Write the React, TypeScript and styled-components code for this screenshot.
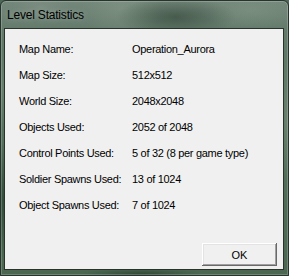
import styled, { createGlobalStyle } from 'styled-components';

const GlobalStyle = createGlobalStyle`
  html, body {
    margin: 0;
    padding: 0;
    background: #4d6656;
  }
  body {
    font-family: "Liberation Sans", Arial, sans-serif;
  }
`;

const stats: [string, string][] = [
  ['Map Name:', 'Operation_Aurora'],
  ['Map Size:', '512x512'],
  ['World Size:', '2048x2048'],
  ['Objects Used:', '2052 of 2048'],
  ['Control Points Used:', '5 of 32 (8 per game type)'],
  ['Soldier Spawns Used:', '13 of 1024'],
  ['Object Spawns Used:', '7 of 1024'],
];

const App = () => {
  return (
    <>
      <GlobalStyle />
      <Window>
        <TitleBar>Level Statistics</TitleBar>
        <Client>
          <StatsGrid>
            {stats.map(([label, value]) => (
              <Row key={label}>
                <Label>{label}</Label>
                <Value>{value}</Value>
              </Row>
            ))}
          </StatsGrid>
          <Footer>
            <Button>OK</Button>
          </Footer>
        </Client>
      </Window>
    </>
  );
};

const Window = styled.div`
  width: 289px;
  height: 276px;
  box-sizing: border-box;
  display: flex;
  flex-direction: column;
  border-radius: 6px 6px 0 0;
  border: 1px solid #26342b;
  // aero basic frame, blurred green texture
  background:
    radial-gradient(ellipse 60px 20px at 175px 16px, rgba(35, 55, 40, 0.5), transparent),
    radial-gradient(ellipse 50px 18px at 250px 10px, rgba(140, 160, 140, 0.35), transparent),
    radial-gradient(ellipse 40px 30px at 120px 8px, rgba(140, 158, 140, 0.4), transparent),
    radial-gradient(ellipse 30px 14px at 40px 6px, rgba(140, 155, 140, 0.35), transparent),
    radial-gradient(ellipse 8px 60px at 3px 200px, rgba(25, 45, 30, 0.55), transparent),
    radial-gradient(ellipse 8px 40px at 3px 90px, rgba(130, 150, 130, 0.35), transparent),
    radial-gradient(ellipse 8px 60px at 286px 120px, rgba(130, 150, 130, 0.45), transparent),
    radial-gradient(ellipse 60px 6px at 140px 273px, rgba(25, 45, 30, 0.5), transparent),
    linear-gradient(180deg, #73877a 0%, #62796a 12%, #54705c 50%, #4b6752 100%);
  box-shadow: inset 0 0 0 1px rgba(255, 255, 255, 0.2);
  overflow: hidden;
`;

const TitleBar = styled.div`
  height: 27px;
  flex: none;
  display: flex;
  align-items: center;
  padding-left: 6px;
  font-size: 12px;
  letter-spacing: -0.2px;
  color: #000;
  text-shadow: 0 0 6px rgba(255, 255, 255, 0.4);
`;

const Client = styled.div`
  flex: 1;
  margin: 0 4px 5px 3px;
  background: #f0f0f0;
  border: 1px solid #27332b;
  display: flex;
  flex-direction: column;
`;

const StatsGrid = styled.div`
  padding: 7px 0 0 14px;
  display: flex;
  flex-direction: column;
`;

const Row = styled.div`
  display: grid;
  grid-template-columns: 113px auto;
  height: 26px;
  line-height: 26px;
  font-size: 11px;
  letter-spacing: -0.3px;
  color: #000;
`;

const Label = styled.span`
  white-space: nowrap;
`;

const Value = styled.span`
  white-space: nowrap;
`;

const Footer = styled.div`
  margin-top: auto;
  display: flex;
  justify-content: flex-end;
  padding: 0 6px 3px 0;
`;

const Button = styled.button`
  width: 75px;
  height: 23px;
  box-sizing: border-box;
  background: #f0f0f0;
  font-family: "Liberation Sans", Arial, sans-serif;
  font-size: 11px;
  color: #000;
  padding: 0;
  border: none;
  border-radius: 0;
  box-shadow:
    inset -1px -1px 0 #696969,
    inset 1px 1px 0 #ffffff,
    inset -2px -2px 0 #a0a0a0,
    inset 2px 2px 0 #e3e3e3;
  cursor: default;
`;

export default App;
